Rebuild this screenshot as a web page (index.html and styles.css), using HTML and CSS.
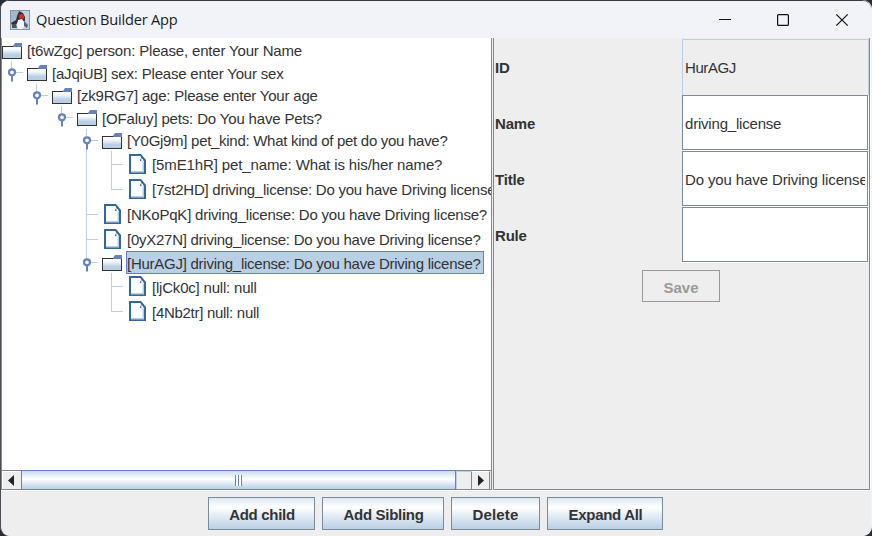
FILE: index.html
```html
<!DOCTYPE html>
<html lang="en">
<head>
<meta charset="utf-8">
<title>Question Builder App</title>
<link rel="stylesheet" href="styles.css">
</head>
<body>
<svg width="0" height="0" class="defs">
  <defs>
    <linearGradient id="gf" x1="0" y1="0" x2="0" y2="1"><stop offset="0" stop-color="#fff"/><stop offset=".25" stop-color="#f4f8fc"/><stop offset=".7" stop-color="#b8cfe5"/><stop offset="1" stop-color="#b8cfe5"/></linearGradient>
    <symbol id="folder" viewBox="0 0 20 16">
      <path d="M0 3h12v1h8v12H0z" fill="#333"/>
      <path d="M1 4h11l1 1h6v10H1z" fill="url(#gf)"/>
      <path d="M11 3l2-3h7v4h-9z" fill="#6382bf"/>
      <path d="M12 4.5h7" stroke="#fff"/>
    </symbol>
    <symbol id="leaf" viewBox="0 0 17 20">
      <path d="M0 0h12l5 6v14H0z" fill="#336699"/>
      <path d="M2 2h9v5h4v11H2z" fill="#fff"/>
      <path d="M13.500 8h1.500v10.500H2V17h11.500z" fill="#b8cfe5"/>
      <path d="M11 2l4.500 5.500h-3l-1.500-3z" fill="#b8cfe5"/>
      <path d="M11.500 2.500v2M13.500 5v2" fill="none" stroke="#fff"/>
    </symbol>
    <symbol id="handle" viewBox="0 0 25 23">
      <path d="M15 11.5h8M11.5 0v8" stroke="#b8cfe5" fill="none"/>
      <path d="M11 14h2v6.500h-2z" fill="#6382bf"/>
      <circle cx="12" cy="11.3" r="3" fill="#fff" stroke="#6382bf" stroke-width="2.2"/>
    </symbol>
  </defs>
</svg>
<div class="window">
  <header class="titlebar">
    <svg class="app-icon" width="20" height="20" viewBox="0 0 20 20">
      <rect width="20" height="20" fill="#8299ad"/><rect x="1" y="1" width="18" height="18" fill="#c3d2de"/>
      <path d="M1 1h7v7l-3 2-3 4H1z" fill="#a3b8c9"/>
      <path d="M9 1l4 2 2 4v4l-3 1-4 0-3 4-3-1-1-2 5-3 1-4z" fill="#303238"/>
      <path d="M8 10l4-1 2 3v5l-2 2H8l-1-4z" fill="#f5f5f5"/>
      <path d="M2 14l4 0 1 4-5 0z" fill="#4b525a"/><path d="M14 11l4 4-1 3-3-2z" fill="#59616b"/>
      <circle cx="11.500" cy="6.500" r="2.5" fill="#e32622"/>
    </svg>
    <h1>Question Builder App</h1>
    <svg class="controls" width="130" height="14" viewBox="0 0 130 14" fill="none" stroke="#111" stroke-width="1.2">
      <path d="M0 6.5h12"/><rect x="58.6" y="1.6" width="10.8" height="10.8" rx="1"/><path d="M117.3 1.3l11.4 11.4M128.7 1.3L117.3 12.7"/>
    </svg>
  </header>
  <main class="split">
    <section class="tree-pane">
      <div class="tree">
        <div class="row h22 s18"><svg class="folder"><use href="#folder"/></svg><span>[t6wZgc] person: Please, enter Your Name</span></div>
        <div class="row h23 s20"><svg class="handle"><use href="#handle"/></svg><svg class="folder"><use href="#folder"/></svg><span>[aJqiUB] sex: Please enter Your sex</span></div>
        <div class="row h22 s20"><i></i><svg class="handle"><use href="#handle"/></svg><svg class="folder"><use href="#folder"/></svg><span>[zk9RG7] age: Please enter Your age</span></div>
        <div class="row h23 s15"><i></i><i></i><svg class="handle"><use href="#handle"/></svg><svg class="folder"><use href="#folder"/></svg><span>[OFaluy] pets: Do You have Pets?</span></div>
        <div class="row h22 s28"><i></i><i></i><i></i><b class="v"><svg class="handle"><use href="#handle"/></svg></b><svg class="folder"><use href="#folder"/></svg><span>[Y0Gj9m] pet_kind: What kind of pet do you have?</span></div>
        <div class="row h25 s12"><i></i><i></i><i></i><b class="v"></b><b class="v t"></b><svg class="leaf"><use href="#leaf"/></svg><span>[5mE1hR] pet_name: What is his/her name?</span></div>
        <div class="row h25 s24"><i></i><i></i><i></i><b class="v"></b><b class="l t"></b><svg class="leaf"><use href="#leaf"/></svg><span>[7st2HD] driving_license: Do you have Driving license?</span></div>
        <div class="row h25 s22"><i></i><i></i><i></i><b class="v t"></b><svg class="leaf"><use href="#leaf"/></svg><span>[NKoPqK] driving_license: Do you have Driving license?</span></div>
        <div class="row h25 s26"><i></i><i></i><i></i><b class="v t"></b><svg class="leaf"><use href="#leaf"/></svg><span>[0yX27N] driving_license: Do you have Driving license?</span></div>
        <div class="row h22 s26"><i></i><i></i><i></i><svg class="handle"><use href="#handle"/></svg><svg class="folder"><use href="#folder"/></svg><span class="selected">[HurAGJ] driving_license: Do you have Driving license?</span></div>
        <div class="row h25 low s20"><i></i><i></i><i></i><i></i><b class="v t"></b><svg class="leaf"><use href="#leaf"/></svg><span>[ljCk0c] null: null</span></div>
        <div class="row h25 low s28"><i></i><i></i><i></i><i></i><b class="l t"></b><svg class="leaf"><use href="#leaf"/></svg><span>[4Nb2tr] null: null</span></div>
      </div>
      <div class="scrollbar">
        <div class="arrow left"><svg width="6" height="11"><path d="M6 0v11L0 5.5z" fill="#222"/></svg></div>
        <div class="thumb"><div class="grip"></div></div>
        <div class="track"></div>
        <div class="arrow right"><svg width="6" height="11"><path d="M0 0v11l6-5.5z" fill="#222"/></svg></div>
      </div>
    </section>
    <section class="form-pane">
      <div class="field"><label>ID</label><div class="input disabled"><span>HurAGJ</span></div></div>
      <div class="field"><label>Name</label><div class="input"><span>driving_license</span></div></div>
      <div class="field"><label>Title</label><div class="input wide"><span>Do you have Driving license?</span></div></div>
      <div class="field"><label>Rule</label><div class="input"></div></div>
      <button class="save" disabled>Save</button>
    </section>
  </main>
  <footer class="actions">
    <button class="w107">Add child</button>
    <button class="w122">Add Sibling</button>
    <button class="w89">Delete</button>
    <button class="w116">Expand All</button>
  </footer>
</div>
</body>
</html>
```
FILE: styles.css
```css
* { box-sizing: border-box; }
body { margin: 0; background: #2b2c33; font: 15px "Liberation Sans", Arial, sans-serif; color: #333; }
.defs { display: block; position: absolute; }
svg { display: block; flex: none; }
.window { width: 871px; height: 536px; border-top: 1px solid #393840; border-left: 1px solid #4b4e55; border-radius: 9px; background: #eee; overflow: hidden; display: flex; flex-direction: column; box-shadow: 1px 0 #f1f3f9; }
.titlebar { height: 37px; flex: none; background: #f1f3f9; display: flex; align-items: center; padding-left: 9px; }
h1 { margin: -2px 0 0 6px; font: 14.6px "Open Sans", sans-serif; letter-spacing: -.2px; color: #1a1a1a; white-space: nowrap; flex: 1; }
.controls { margin-right: 22px; }
.split { height: 453px; flex: none; display: flex; }
.tree-pane { width: 491px; flex: none; border-right: 1px solid #7a8a99; border-left: 1px solid #7a8a99; border-bottom: 1px solid #7a8a99; height: 452px; display: flex; flex-direction: column; background: #fff; }
.tree { flex: 1; overflow: hidden; padding-top: 1px; margin-left: -1px; }
.row { display: flex; white-space: nowrap; margin-left: -1px; }
.row > i, .row > b { width: 25px; flex: none; height: 100%; }
.h22 { height: 22px; }
.h23 { height: 23px; }
.h25 { height: 25px; }
.s12 { letter-spacing: -.12px; }
.s15 { letter-spacing: -.16px; }
.s18 { letter-spacing: -.17px; }
.s20 { letter-spacing: -.2px; }
.s22 { letter-spacing: -.22px; }
.s24 { letter-spacing: -.24px; }
.s26 { letter-spacing: -.26px; }
.s28 { letter-spacing: -.29px; }
.v { background: linear-gradient(#b8cfe5, #b8cfe5) 11px 0 / 1px 100% no-repeat; }
.l { background: linear-gradient(#b8cfe5, #b8cfe5) 11px 0 / 1px 14px no-repeat; }
.t::after { content: ""; display: block; width: 12px; height: 1px; background: #b8cfe5; margin: 13px 0 0 11px; }
.handle { width: 25px; height: 23px; }
.folder { width: 20px; height: 16px; margin: 4px 4px 0 2px; }
.leaf { width: 17px; height: 20px; margin: 3px 5px 0 4px; }
.row span { height: 23px; line-height: 24px; padding: 0 3px 0 1px; }
.h23 span { line-height: 26px; }
.h25 span { height: 25px; line-height: 28px; }
.low span { line-height: 30px; }
.row .selected { background: #b8cfe5; border: 1px solid #6382bf; line-height: 23px; padding: 0 2px 0 0; }
.scrollbar { height: 19px; flex: none; display: flex; border-top: 1px solid #7a8a99; background: #eee; }
.arrow { width: 18px; flex: none; display: flex; align-items: center; justify-content: center; border-top: 1px solid #fff; border-left: 1px solid #fff; }
.arrow.left { width: 19px; padding-right: 3px; }
.thumb { width: 435px; flex: none; margin-top: -1px; border: 1px solid #6382bf; border-bottom: 0; background: linear-gradient(#c8dced, #fff 45%, #b8cfe5); display: flex; align-items: center; justify-content: center; }
.grip { width: 7px; height: 11px; background: repeating-linear-gradient(90deg, #6382bf 0 1px, #fff 1px 3px); }
.track { width: 15px; flex: none; border-top: 1px solid #b8cfe5; border-left: 1px solid #b8cfe5; }
.arrow.right { width: 19px; border-left: 1px solid #7a8a99; border-right: 1px solid #7a8a99; }
.form-pane { width: 377px; flex: none; height: 452px; margin-left: 1px; border: 1px solid #7a8a99; border-top: 0; box-shadow: 1px 1px #fff; padding-top: 1px; display: flex; flex-direction: column; }
.field { display: flex; height: 56px; }
label { width: 188px; flex: none; font-weight: bold; line-height: 58px; padding-left: 1px; letter-spacing: -.2px; }
.input { width: 186px; flex: none; height: 55px; border: 1px solid #7a8a99; background: #fff; box-shadow: 1px 1px #fff; line-height: 55px; padding: 0 2px; white-space: nowrap; letter-spacing: -.2px; }
.input span { display: block; overflow: hidden; }
.wide { letter-spacing: -.12px; }
.disabled { width: 187px; height: 56px; border-color: #b8cfe5; border-bottom: 0; background: #eee; box-shadow: none; letter-spacing: -.4px; }
button { font: bold 15px "Liberation Sans", Arial, sans-serif; color: #333; border: 1px solid #7a8a99; padding: 2px 0 0 1px; background: linear-gradient(#dde8f3, #fff 30%, #b8cfe5); white-space: nowrap; letter-spacing: -.3px; }
.save { width: 78px; height: 32px; margin: 7px 0 0 148px; padding: 3px 0 0; background: #eee; color: #999; border-color: #999; letter-spacing: 0; }
.actions { border-top: 1px solid #fff; margin-top: -1px; flex: 1; display: flex; padding: 6px 0 0 207px; gap: 7px; }
.actions button { height: 33px; }
.w107 { width: 107px; }
.w122 { width: 122px; }
.actions .w89 { width: 89px; letter-spacing: .2px; padding-left: 0; }
.w116 { width: 116px; }
```
